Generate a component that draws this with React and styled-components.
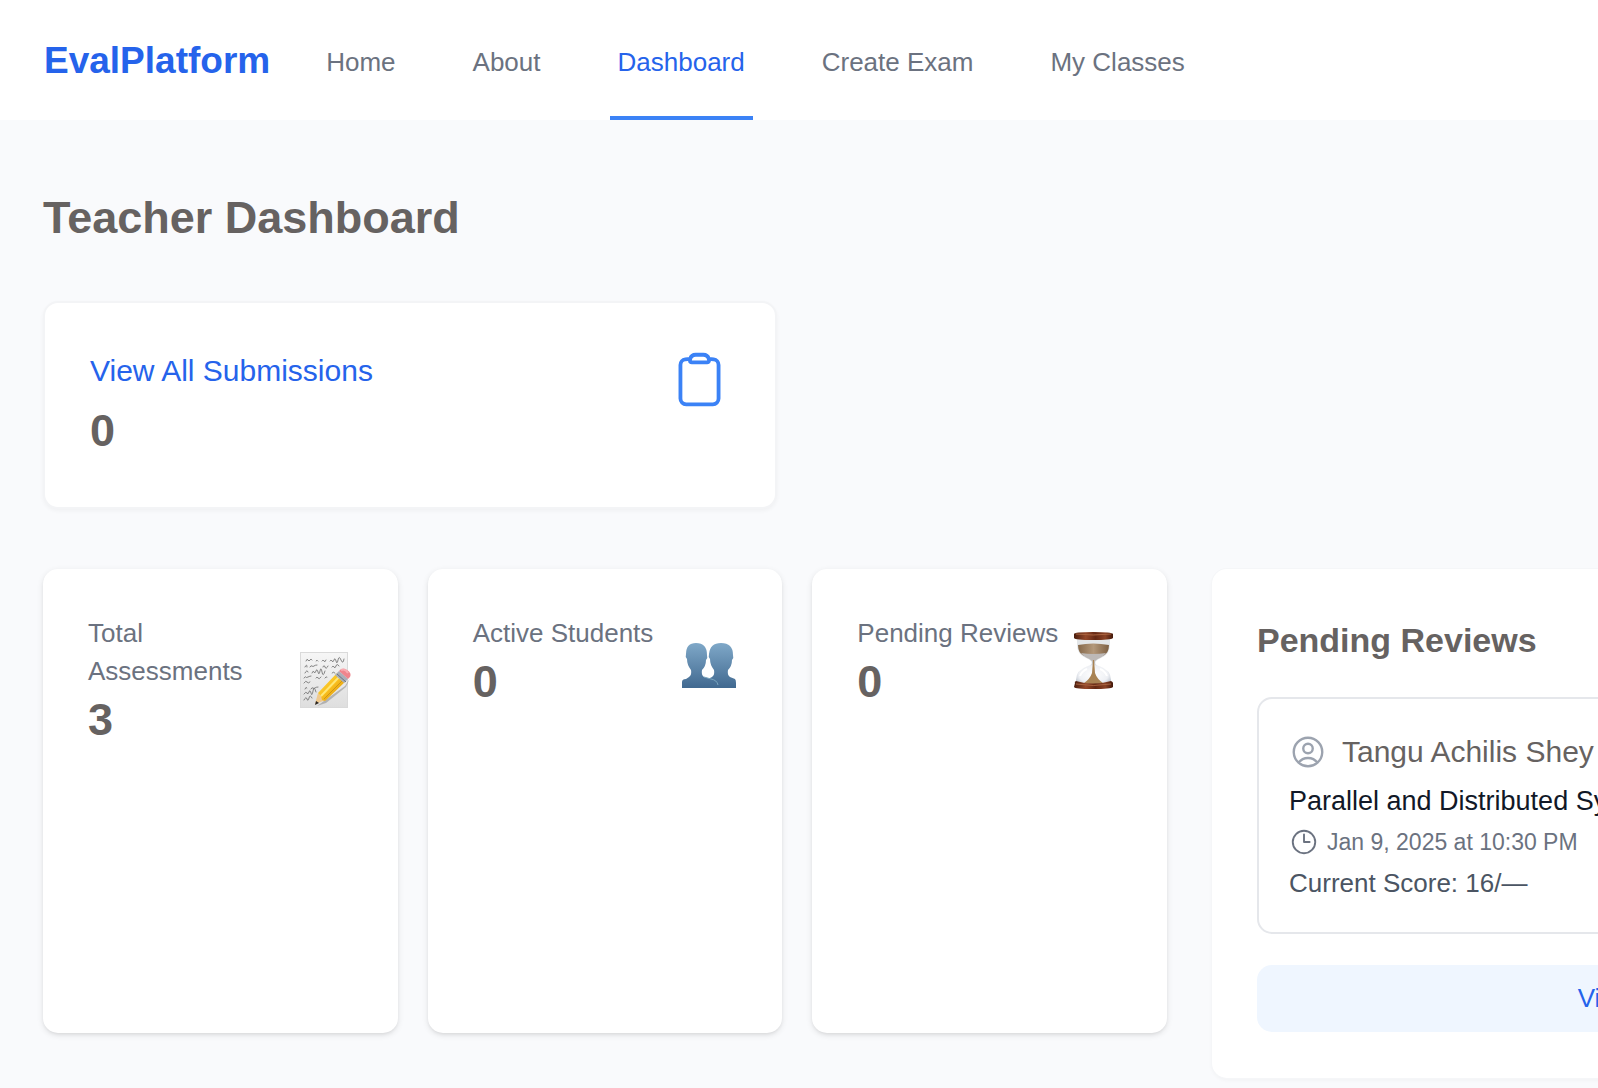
import React from "react";
import styled, { createGlobalStyle } from "styled-components";

const INK = "#666261";
const BLUE = "#2563eb";
const MUTED = "#6b7280";

const GlobalStyle = createGlobalStyle`
  *, *::before, *::after { box-sizing: border-box; }
  body {
    margin: 0;
    background: #f9fafc;
    font-family: "Liberation Sans", Arial, sans-serif;
    color: ${INK};
  }
  h1, h2, p { margin: 0; font-weight: 400; }
  a { color: inherit; text-decoration: none; }
  svg { display: block; flex: none; overflow: visible; }
`;

const Page = styled.div`
  min-height: 100vh;
  overflow: hidden;
`;

const Header = styled.header`
  display: flex;
  align-items: center;
  gap: 48px;
  height: 120px;
  padding: 2px 44px 0;
  background: #fff;
`;

const Brand = styled.a`
  && { color: ${BLUE}; }
  font-size: 37px;
  font-weight: 700;
  line-height: 54px;
`;

const Nav = styled.nav`
  display: flex;
  align-self: stretch;
  gap: 61px;
`;

const NavLink = styled.a`
  display: flex;
  align-items: center;
  padding: 6px 8px 0;
  border-bottom: 4px solid ${(p) => (p.$active ? "#3b82f6" : "transparent")};
  && { color: ${(p) => (p.$active ? BLUE : MUTED)}; }
  font-size: 26px;
  line-height: 38px;
  white-space: nowrap;
`;

const Main = styled.main`
  padding: 68px 43px 0;
`;

const Title = styled.h1`
  && {
    margin-bottom: 53px;
    font-weight: 700;
  }
  font-size: 45px;
  line-height: 60px;
`;

const SummaryCard = styled.section`
  display: flex;
  align-items: flex-start;
  justify-content: space-between;
  max-width: 734px;
  margin-bottom: 60px;
  padding: 46px 45px;
  background: #fff;
  border: 2px solid #f3f4f6;
  border-radius: 15px;
  box-shadow: 0 2px 4px rgba(0, 0, 0, 0.04);
`;

const SummaryText = styled.div`
  display: grid;
  gap: 8px;
`;

const SummaryLink = styled.a`
  && { color: ${BLUE}; }
  font-size: 30px;
  line-height: 44px;
`;

const Value = styled.p`
  && { font-weight: 700; }
  font-size: 45px;
  line-height: 60px;
`;

const Columns = styled.div`
  display: grid;
  grid-template-columns: minmax(1124px, 1fr) minmax(822px, 1fr);
  gap: 45px;
`;

const Stats = styled.div`
  display: grid;
  grid-template-columns: repeat(3, 1fr);
  gap: 30px;
  margin-bottom: 45px;
`;

const StatCard = styled.section`
  padding: 45px;
  background: #fff;
  border-radius: 15px;
  box-shadow: 0 2px 6px rgba(0, 0, 0, 0.1), 0 2px 4px -2px rgba(0, 0, 0, 0.1);
`;

const StatBody = styled.div`
  display: flex;
  align-items: center;
  justify-content: space-between;
`;

const StatLabel = styled.p`
  color: ${MUTED};
  font-size: 26px;
  line-height: 38px;
`;

const Panel = styled.section`
  padding: 45px 45px 46px;
  background: #fff;
  border-radius: 15px;
  box-shadow: 0 0 0 1px #f5f6f8, 0 2px 4px rgba(0, 0, 0, 0.04);
`;

const PanelTitle = styled.h2`
  && { font-weight: 700; }
  font-size: 34px;
  line-height: 53px;
`;

const Review = styled.article`
  display: grid;
  gap: 7px;
  margin: 30px 0 31px;
  padding: 30px;
  border: 2px solid #e5e7eb;
  border-radius: 15px;
`;

const Student = styled.div`
  display: flex;
  align-items: center;
  gap: 15px;
  font-size: 30px;
  line-height: 46px;
`;

const Subject = styled.p`
  color: #111827;
  font-size: 27px;
  line-height: 38px;
`;

const Submitted = styled.div`
  display: flex;
  align-items: center;
  gap: 8px;
  color: ${MUTED};
  font-size: 23px;
  line-height: 30px;
`;

const Score = styled.p`
  color: #4b5563;
  font-size: 26px;
  line-height: 38px;
`;

const ViewAll = styled.button`
  display: block;
  width: 100%;
  height: 67px;
  padding: 0 30px;
  border: 0;
  border-radius: 15px;
  background: #eff6ff;
  color: ${BLUE};
  font-family: inherit;
  font-size: 26px;
  cursor: pointer;
`;

function Outline({ size, color, d }) {
  return (
    <svg
      width={size}
      height={size}
      viewBox="0 0 24 24"
      fill="none"
      stroke={color}
      strokeWidth="1.5"
      strokeLinecap="round"
      strokeLinejoin="round"
      aria-hidden="true"
    >
      <path d={d} />
    </svg>
  );
}

const CLIPBOARD =
  "M15.666 3.888A2.25 2.25 0 0 0 13.5 2.25h-3c-1.03 0-1.9.693-2.166 1.638m7.332 0c.055.194.084.4.084.612v0a.75.75 0 0 1-.75.75H9a.75.75 0 0 1-.75-.75v0c0-.212.03-.418.084-.612m7.332 0c.646.049 1.288.11 1.927.184 1.1.128 1.907 1.077 1.907 2.185V19.5a2.25 2.25 0 0 1-2.25 2.25H6.75A2.25 2.25 0 0 1 4.5 19.5V6.257c0-1.108.806-2.057 1.907-2.185a48.208 48.208 0 0 1 1.927-.184";
const USER =
  "M17.982 18.725A7.488 7.488 0 0 0 12 15.75a7.488 7.488 0 0 0-5.982 2.975m11.963 0a9 9 0 1 0-11.963 0m11.963 0A8.966 8.966 0 0 1 12 21a8.966 8.966 0 0 1-5.982-2.275M15 9.75a3 3 0 1 1-6 0 3 3 0 0 1 6 0Z";
const CLOCK = "M12 6v6h4.5m4.5 0a9 9 0 1 1-18 0 9 9 0 0 1 18 0Z";

function MemoIcon() {
  return (
    <svg width="57" height="57" viewBox="0 2 57 57" aria-hidden="true">
      <defs>
        <linearGradient id="memo-paper" x1="0" y1="0" x2="0" y2="1">
          <stop offset="0" stopColor="#f6f6f6" />
          <stop offset="1" stopColor="#dedede" />
        </linearGradient>
        <linearGradient id="memo-wood" x1="0" y1="0" x2="1" y2="1">
          <stop offset="0" stopColor="#ffdf45" />
          <stop offset="0.5" stopColor="#f8bd1d" />
          <stop offset="1" stopColor="#c98408" />
        </linearGradient>
      </defs>
      <rect x="4.500" y="0.500" width="47" height="55" fill="url(#memo-paper)" stroke="#dadada" />
      <g fill="none" stroke="#6a6a6a" strokeWidth="0.8" strokeLinecap="round">
        <path d="M10 9q1-3 2-1t2 0 2 0M20 9q1-2 2 0M26 9q1-2 2 0t2-1M34 9q1-2 2 0t2-1 2 1 2-1 3 0 3-1" />
        <path d="M9 15q2-4 2 0M14 15q1-2 2-1t2 0 3-1M27 15q1-3 2 0t3-1M36 15q1-2 2 0t2-1 3 0" />
        <path d="M9 21q2-4 3-1M16 21q1-3 2-1t2-1 2 1 2-1 2 1 3-1M36 21q1-2 3 0" />
        <path d="M8 26q2-2 2-1t2 0 3-1M20 26q1-2 2 0t3-1M29 26q1-2 2-1" />
        <path d="M8 31q2-3 3-1t3 0" />
        <path d="M9 37q1-3 2-1M15 37q1-2 2-1t2 0 3-1" />
        <path d="M8 42q2-3 3-1t2-1 2 1 2-2 3 1" />
        <path d="M8 48q2-4 3-1t2-1 3 0" />
      </g>
      <path d="M21 54L49 34L54 26L50 35L30 51Z" fill="#777" opacity="0.45" />
      <path d="M19 52l3-11 8 7z" fill="#efc88d" />
      <path d="M19 53l1-4 3 2z" fill="#292522" />
      <path d="M22 41L41 21l9 8-21 20-3-1-1-4z" fill="url(#memo-wood)" />
      <path d="M25 44L44 24" stroke="#ffe775" strokeWidth="2" />
      <path d="M28 47L48 27" stroke="#d29410" strokeWidth="1" />
      <path d="M39 23l4-4 9 8-4 4z" fill="#a9afb9" />
      <path d="M41 22l9 8" stroke="#6c7380" strokeWidth="1" />
      <path d="M43 19q3-4 8-1 5 3 3 7l-2 2z" fill="#ef858d" />
      <path d="M45 18q4-2 7 3" fill="none" stroke="#f8aab0" strokeWidth="2" />
    </svg>
  );
}

function StudentsIcon() {
  return (
    <svg width="57" height="57" viewBox="0 0 57 57" aria-hidden="true">
      <defs>
        <linearGradient id="bust" x1="0" y1="0" x2="0" y2="1">
          <stop offset="0" stopColor="#7fa8c8" />
          <stop offset="1" stopColor="#416990" />
        </linearGradient>
      </defs>
      <path
        d="M24 53V48q0-3 4-4l4-2q3-2 2-7-4-5-4-11-2-2-1-5Q30 8 41 8q12 0 12 12 1 3-1 5 0 6-4 10-1 5 2 7l5 2q1 1 1 4v5z"
        fill="url(#bust)"
      />
      <path
        d="M2 53V47q0-3 4-3l3-2q3-2 2-7-4-5-4-11-2-2-1-5Q6 8 16 8q11 0 11 12 1 3-1 5 0 6-4 10-1 5 2 7l7 2q7 1 7 9z"
        fill="url(#bust)"
      />
      <path d="M24 42l7 2q6 1 7 6" fill="none" stroke="#7ba6bf" strokeWidth="1" />
    </svg>
  );
}

function HourglassIcon() {
  return (
    <svg width="57" height="57" viewBox="0 3 57 57" aria-hidden="true">
      <defs>
        <linearGradient id="cap" x1="0" y1="0" x2="1" y2="0">
          <stop offset="0" stopColor="#4b1d0d" />
          <stop offset="0.300" stopColor="#94482a" />
          <stop offset="0.550" stopColor="#642813" />
          <stop offset="0.800" stopColor="#8a4224" />
          <stop offset="1" stopColor="#43180a" />
        </linearGradient>
        <linearGradient id="sand" x1="0" y1="0" x2="1" y2="0">
          <stop offset="0" stopColor="#85684a" />
          <stop offset="0.500" stopColor="#b3987a" />
          <stop offset="1" stopColor="#7c5f42" />
        </linearGradient>
        <radialGradient id="glass" cx="0.500" cy="0.600" r="0.600">
          <stop offset="0" stopColor="#ffffff" />
          <stop offset="0.700" stopColor="#eef0f4" />
          <stop offset="1" stopColor="#b9c1cc" />
        </radialGradient>
      </defs>
      <path d="M12 7h33v6q0 9-9 13-5 2-6 5h-3q-1-3-6-5-9-4-9-13z" fill="#e3e6e8" />
      <path d="M13 13q15-3 31 0 0 8-6 11H19q-6-3-6-11z" fill="url(#sand)" />
      <path d="M16 21q12 2 25 0-2 3-6 5-5 2-6 5h-1q-1-3-6-5-4-2-6-5z" fill="#bdb9b7" />
      <path d="M27 30h3q0 3 4 4 12 4 12 14v3H11v-3q0-10 12-14 4-1 4-4z" fill="url(#glass)" />
      <path d="M28 28h1l1 13q2 6 8 10-9 2-19 0 6-4 8-10z" fill="#a98353" />
      <path d="M15 44q2-5 7-7M42 44q-2-5-7-7" fill="none" stroke="#fff" strokeWidth="2" />
      <path d="M9 2q0-2 19-2t20 2v4q-2 2-20 2T9 6z" fill="url(#cap)" />
      <path d="M11 2q17 2 35 0" fill="none" stroke="#a9633f" strokeWidth="1" />
      <path d="M10 51q-1-1 1-2 17 5 35 0 2 1 2 2v4q-2 2-20 2T9 55z" fill="url(#cap)" />
      <path d="M11 52q17 3 35 0" fill="none" stroke="#a9633f" strokeWidth="1" />
    </svg>
  );
}

const LINKS = ["Home", "About", "Dashboard", "Create Exam", "My Classes"];

const STATS = [
  { label: "Total Assessments", value: 3, Icon: MemoIcon },
  { label: "Active Students", value: 0, Icon: StudentsIcon },
  { label: "Pending Reviews", value: 0, Icon: HourglassIcon },
];

export default function App() {
  return (
    <Page>
      <GlobalStyle />
      <Header>
        <Brand href="#">EvalPlatform</Brand>
        <Nav aria-label="Main">
          {LINKS.map((name) => (
            <NavLink
              key={name}
              href="#"
              $active={name === "Dashboard"}
              aria-current={name === "Dashboard" ? "page" : undefined}
            >
              {name}
            </NavLink>
          ))}
        </Nav>
      </Header>
      <Main>
        <Title>Teacher Dashboard</Title>
        <SummaryCard>
          <SummaryText>
            <SummaryLink href="#">View All Submissions</SummaryLink>
            <Value>0</Value>
          </SummaryText>
          <Outline size={61} color="#3b82f6" d={CLIPBOARD} />
        </SummaryCard>
        <Columns>
          <Stats>
            {STATS.map(({ label, value, Icon }) => (
              <StatCard key={label}>
                <StatBody>
                  <div>
                    <StatLabel>{label}</StatLabel>
                    <Value>{value}</Value>
                  </div>
                  <Icon />
                </StatBody>
              </StatCard>
            ))}
          </Stats>
          <Panel>
            <PanelTitle>Pending Reviews</PanelTitle>
            <Review>
              <Student>
                <Outline size={38} color="#9ca3af" d={USER} />
                Tangu Achilis Shey
              </Student>
              <Subject>Parallel and Distributed Systems</Subject>
              <Submitted>
                <Outline size={30} color={MUTED} d={CLOCK} />
                <time dateTime="2025-01-09T22:30">Jan 9, 2025 at 10:30 PM</time>
              </Submitted>
              <Score>Current Score: 16/—</Score>
            </Review>
            <ViewAll type="button">View All</ViewAll>
          </Panel>
        </Columns>
      </Main>
    </Page>
  );
}
